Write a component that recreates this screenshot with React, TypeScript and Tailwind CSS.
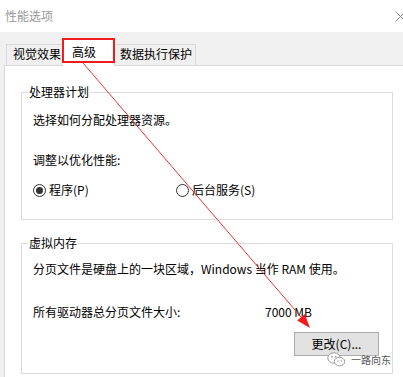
import React from 'react';

const Radio = ({ checked }: { checked?: boolean }) => (
  <span className="w-[13px] h-[13px] rounded-full border border-[#333] bg-white flex items-center justify-center shrink-0">
    {checked && <span className="w-[7px] h-[7px] rounded-full bg-[#333]" />}
  </span>
);

const Arrow = () => (
  <svg className="absolute inset-0 z-20 pointer-events-none" width="403" height="377" viewBox="0 0 403 377">
    <line x1="83" y1="63" x2="301" y2="317" stroke="#f03030" strokeWidth="1" />
    <polygon points="310,328 297.2,320.5 304.8,314.1" fill="#f01c1c" />
  </svg>
);

const Watermark = () => (
  <div className="absolute z-20 left-[327px] top-[352px] flex items-center gap-[5px] pointer-events-none">
    <svg width="19" height="15" viewBox="0 0 19 15">
      <ellipse cx="7" cy="6" rx="6.2" ry="5.2" fill="#fff" stroke="#9a9a9a" strokeWidth="1" />
      <ellipse cx="12.5" cy="9.5" rx="5.2" ry="4.3" fill="#fff" stroke="#9a9a9a" strokeWidth="1" />
      <circle cx="5" cy="4.8" r="0.9" fill="#9a9a9a" />
      <circle cx="8.6" cy="4.8" r="0.9" fill="#9a9a9a" />
      <circle cx="11" cy="9" r="0.7" fill="#9a9a9a" />
      <circle cx="14.2" cy="9" r="0.7" fill="#9a9a9a" />
    </svg>
    <span className="text-[10px] leading-[12px] text-[#555] [text-shadow:0_0_2px_#fff,0_0_2px_#fff]">一路向东</span>
  </div>
);

export default function App() {
  return (
    <div className="relative w-[403px] h-[377px] overflow-hidden bg-white text-[12px] leading-[16px] text-black font-['Noto_Sans_CJK_SC','Noto_Sans',sans-serif] flex flex-col">
      {/* title bar */}
      <div className="h-[32px] flex items-center pl-[5px] shrink-0">
        <span className="text-[#999]">性能选项</span>
        <svg className="ml-auto mr-[-3px]" width="11" height="11" viewBox="0 0 11 11">
          <path d="M0.5 0.5 L10.5 10.5 M10.5 0.5 L0.5 10.5" stroke="#888" strokeWidth="1" />
        </svg>
      </div>

      <div className="flex-1 bg-[#f0f0f0] pl-[4px] flex flex-col">
        {/* tabs */}
        <div className="h-[33px] flex items-end pl-[2px] shrink-0">
          <div className="w-[56px] h-[21px] border-l border-t border-[#d9d9d9] bg-[#f0f0f0] pl-[6px] pt-[1px]">视觉效果</div>
          <div className="relative z-10 w-[53px] h-[28px] -mb-px border-l border-t border-r border-[#d9d9d9] bg-white pl-[9px] pt-[5px]">高级</div>
          <div className="w-[81px] h-[21px] border-t border-r border-[#d9d9d9] bg-[#f0f0f0] pl-[5px] pt-[1px]">数据执行保护</div>
        </div>

        {/* panel */}
        <div className="flex-1 bg-white border-l border-t border-[#d9d9d9] pl-[16px] pr-[10px] pt-[18px]">
          <fieldset className="border border-[#dcdcdc]">
            <legend className="ml-[6px] px-[1px] leading-[16px]">处理器计划</legend>
            <div className="pl-[11px] pt-[12px] pb-[21px]">
              <div>选择如何分配处理器资源。</div>
              <div className="mt-[24px]">调整以优化性能:</div>
              <div className="mt-[14px] h-[16px] flex items-center">
                <div className="w-[143px] flex items-center gap-[3px]">
                  <Radio checked />
                  <span>程序(P)</span>
                </div>
                <div className="flex items-center gap-[3px]">
                  <Radio />
                  <span>后台服务(S)</span>
                </div>
              </div>
            </div>
          </fieldset>

          <fieldset className="mt-[15px] border border-[#dcdcdc]">
            <legend className="ml-[6px] px-[1px] leading-[16px]">虚拟内存</legend>
            <div className="pl-[11px] pr-[13px] pt-[10px] pb-[17px]">
              <div>分页文件是硬盘上的一块区域，Windows 当作 RAM 使用。</div>
              <div className="mt-[27px] flex">
                <span className="w-[232px]">所有驱动器总分页文件大小:</span>
                <span>7000 MB</span>
              </div>
              <div className="mt-[12px] flex justify-end">
                <button className="w-[85px] h-[24px] bg-[#e1e1e1] border border-[#adadad] text-[12px] leading-[16px]">更改(C)...</button>
              </div>
            </div>
          </fieldset>
        </div>
      </div>

      {/* annotations */}
      <div className="absolute z-20 left-[62px] top-[38px] w-[53px] h-[25px] border-2 border-[#ee1c1c] pointer-events-none" />
      <Arrow />
      <Watermark />
    </div>
  );
}
